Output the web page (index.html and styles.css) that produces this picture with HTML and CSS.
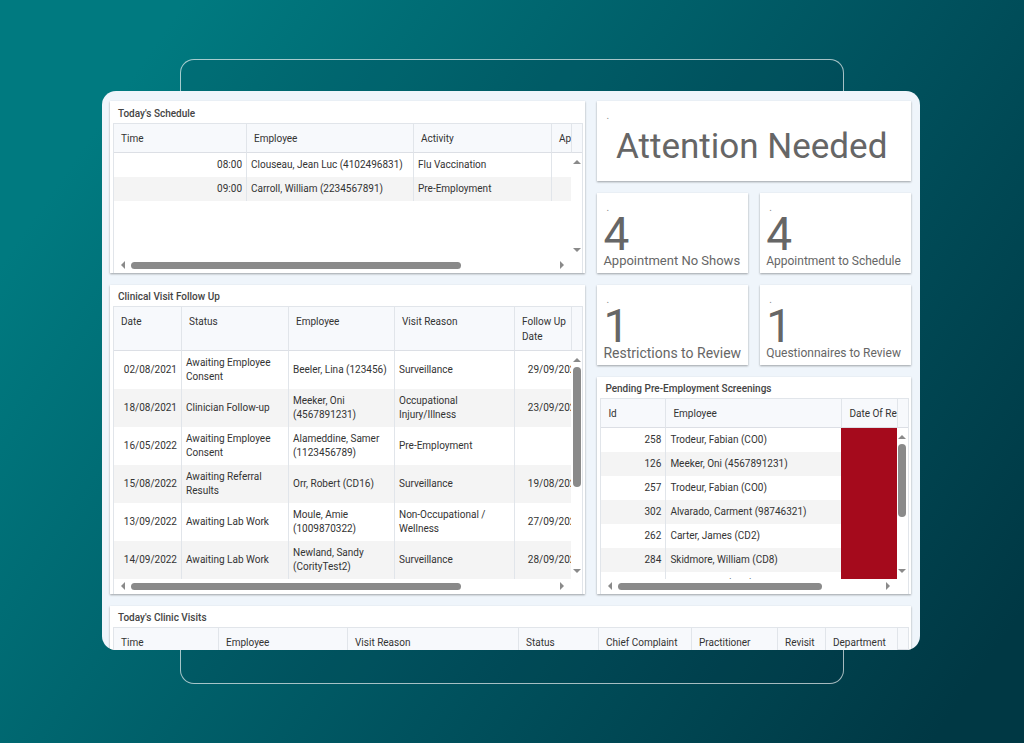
FILE: index.html
```html
<!DOCTYPE html>
<html lang="en">
<head>
    <meta charset="UTF-8">
    <meta name="viewport" content="width=device-width, initial-scale=1.0">
    <title>Clinic Dashboard</title>
    <link rel="stylesheet" href="styles.css">
</head>
<body>

<div class="stage">
    <div class="outline"></div>
    <main class="dashboard">

        <section class="panel schedule">
            <h2>Today's Schedule</h2>
            <div class="grid">
                <div class="view">
                    <table class="schedule-table">
                        <thead>
                            <tr><th class="w-time">Time</th><th class="w-employee">Employee</th><th class="w-activity">Activity</th><th>Appointment</th></tr>
                        </thead>
                        <tbody>
                            <tr><td class="num">08:00</td><td>Clouseau, Jean Luc (4102496831)</td><td>Flu Vaccination</td><td></td></tr>
                            <tr><td class="num">09:00</td><td>Carroll, William (2234567891)</td><td>Pre-Employment</td><td></td></tr>
                        </tbody>
                    </table>
                </div>
                <div class="side">
                    <div class="corner"></div>
                    <div class="vbar"><i class="up"></i><div class="track"></div><i class="down"></i></div>
                </div>
                <div class="hbar"><i class="left"></i><div class="track"><div class="thumb"></div></div><i class="right"></i></div>
            </div>
        </section>

        <section class="panel attention">
            <span class="dot">.</span>
            <h1>Attention Needed</h1>
        </section>

        <section class="panel card">
            <span class="dot">.</span>
            <strong>4</strong>
            <p class="medium">Appointment No Shows</p>
        </section>
        <section class="panel card">
            <span class="dot">.</span>
            <strong>4</strong>
            <p class="small">Appointment to Schedule</p>
        </section>

        <section class="panel followup">
            <h2>Clinical Visit Follow Up</h2>
            <div class="grid">
                <div class="view">
                    <table class="followup-table">
                        <thead>
                            <tr><th class="w-date">Date</th><th class="w-status">Status</th><th class="w-person">Employee</th><th class="w-reason">Visit Reason</th><th>Follow Up Date</th></tr>
                        </thead>
                        <tbody>
                            <tr><td class="num">02/08/2021</td><td>Awaiting Employee Consent</td><td>Beeler, Lina (123456)</td><td>Surveillance</td><td class="num">29/09/2021</td></tr>
                            <tr><td class="num">18/08/2021</td><td>Clinician Follow-up</td><td>Meeker, Oni (4567891231)</td><td>Occupational Injury/Illness</td><td class="num">23/09/2021</td></tr>
                            <tr><td class="num">16/05/2022</td><td>Awaiting Employee Consent</td><td>Alameddine, Samer (1123456789)</td><td>Pre-Employment</td><td></td></tr>
                            <tr><td class="num">15/08/2022</td><td>Awaiting Referral Results</td><td>Orr, Robert (CD16)</td><td>Surveillance</td><td class="num">19/08/2022</td></tr>
                            <tr><td class="num">13/09/2022</td><td>Awaiting Lab Work</td><td>Moule, Amie (1009870322)</td><td>Non-Occupational / Wellness</td><td class="num">27/09/2022</td></tr>
                            <tr><td class="num">14/09/2022</td><td>Awaiting Lab Work</td><td>Newland, Sandy (CorityTest2)</td><td>Surveillance</td><td class="num">28/09/2022</td></tr>
                        </tbody>
                    </table>
                </div>
                <div class="side">
                    <div class="corner tall"></div>
                    <div class="vbar"><i class="up"></i><div class="track"><div class="thumb"></div></div><i class="down"></i></div>
                </div>
                <div class="hbar"><i class="left"></i><div class="track"><div class="thumb"></div></div><i class="right"></i></div>
            </div>
        </section>

        <section class="panel card">
            <span class="dot">.</span>
            <strong>1</strong>
            <p>Restrictions to Review</p>
        </section>
        <section class="panel card">
            <span class="dot">.</span>
            <strong>1</strong>
            <p class="small">Questionnaires to Review</p>
        </section>

        <section class="panel pending">
            <h2>Pending Pre-Employment Screenings</h2>
            <div class="grid">
                <div class="view">
                    <table class="pending-table">
                        <thead>
                            <tr><th class="w-id">Id</th><th class="w-name">Employee</th><th>Date Of Results</th></tr>
                        </thead>
                        <tbody>
                            <tr><td class="num">258</td><td>Trodeur, Fabian (CO0)</td><td class="overdue"></td></tr>
                            <tr><td class="num">126</td><td>Meeker, Oni (4567891231)</td><td class="overdue"></td></tr>
                            <tr><td class="num">257</td><td>Trodeur, Fabian (CO0)</td><td class="overdue"></td></tr>
                            <tr><td class="num">302</td><td>Alvarado, Carment (98746321)</td><td class="overdue"></td></tr>
                            <tr><td class="num">262</td><td>Carter, James (CD2)</td><td class="overdue"></td></tr>
                            <tr><td class="num">284</td><td>Skidmore, William (CD8)</td><td class="overdue"></td></tr>
                            <tr><td class="num">261</td><td>Vau, Carlisle (CD4)</td><td class="overdue"></td></tr>
                        </tbody>
                    </table>
                </div>
                <div class="side">
                    <div class="corner"></div>
                    <div class="vbar"><i class="up"></i><div class="track"><div class="thumb"></div></div><i class="down"></i></div>
                </div>
                <div class="hbar"><i class="left"></i><div class="track"><div class="thumb"></div></div><i class="right"></i></div>
            </div>
        </section>

        <section class="panel visits">
            <h2>Today's Clinic Visits</h2>
            <div class="grid">
                <div class="view">
                    <table class="visits-table">
                        <thead>
                            <tr><th class="v-time">Time</th><th class="v-employee">Employee</th><th class="v-reason">Visit Reason</th><th class="v-status">Status</th><th class="v-complaint">Chief Complaint</th><th class="v-doctor">Practitioner</th><th class="v-revisit">Revisit</th><th>Department</th></tr>
                        </thead>
                    </table>
                </div>
                <div class="side">
                    <div class="corner"></div>
                </div>
            </div>
        </section>

    </main>
</div>

</body>
</html>
```

FILE: styles.css
```css
* {
    box-sizing: border-box;
}
body {
    margin: 0;
    font-family: Roboto, Arial, sans-serif;
    font-size: 10px;
    line-height: 14px;
    color: #333;
}
h1, h2, p {
    margin: 0;
}
.stage {
    display: grid;
    min-height: 100vh;
    padding: 59px 104px 59px 102px;
    background: linear-gradient(125deg, #007a80 12%, #00525e 60%, #003844 94%);
}
.outline {
    grid-area: 1 / 1;
    margin: 0 76px 0 78px;
    border: 1px solid rgba(255, 255, 255, 0.65);
    border-radius: 14px;
    background: rgba(0, 30, 45, 0.1);
}
.dashboard {
    grid-area: 1 / 1;
    align-self: start;
    display: grid;
    grid-template-columns: 476fr 151fr 151fr;
    grid-template-rows: 80px 80px 80px 217px 44px;
    gap: 12px;
    margin-top: 32px;
    padding: 10px 9px 0 8px;
    border-radius: 14px;
    background: #eff5fb;
    overflow: hidden;
}
.panel {
    display: flex;
    flex-direction: column;
    min-width: 0;
    min-height: 0;
    background: #fff;
    box-shadow: 0 1px 2px rgba(0, 0, 0, 0.35);
}
.schedule {
    grid-row: 1 / 3;
    grid-column: 1;
}
.attention {
    grid-column: 2 / 4;
}
.followup {
    grid-row: 3 / 5;
    grid-column: 1;
}
.pending {
    grid-column: 2 / 4;
}
.visits {
    grid-column: 1 / 4;
}
.panel h2 {
    padding: 4px 8px 2px;
    font-size: 10px;
    line-height: 15px;
    font-weight: 500;
    color: #444;
}
.schedule h2 {
    padding-top: 5px;
}

/* number cards */
.dot {
    padding: 10px 9px 0;
    line-height: 10px;
    color: #888;
}
.attention h1 {
    padding-right: 5px;
    font-size: 35px;
    line-height: 52px;
    font-weight: 400;
    text-align: center;
    color: #666;
}
.card strong {
    padding: 0 6px;
    font-size: 46px;
    line-height: 42px;
    font-weight: 400;
    color: #666;
}
.card p {
    padding: 0 6px;
    font-size: 14px;
    line-height: 12px;
    white-space: nowrap;
    color: #666;
}
.card .medium {
    font-size: 13px;
}
.card .small {
    font-size: 12px;
}

/* data grids */
.grid {
    flex: 1;
    display: grid;
    grid-template-columns: minmax(0, 1fr) 11px;
    grid-template-rows: minmax(0, 1fr) auto;
    min-height: 0;
    margin: 0 2px 0 3px;
    border: 1px solid #e1e5ea;
    border-bottom: none;
}
.view {
    overflow: hidden;
}
table {
    table-layout: fixed;
    border-collapse: separate;
    border-spacing: 0;
}
th {
    padding: 7px 7px 6px;
    font-weight: 400;
    line-height: 15px;
    text-align: left;
    vertical-align: top;
    white-space: nowrap;
    background: #f7f9fc;
    border-bottom: 1px solid #dcdfe5;
}
td {
    height: 24px;
    padding: 5px 4px;
}
th + th, td + td {
    border-left: 1px solid #e1e5ea;
}
tbody tr:nth-child(even) {
    background: #f4f4f4;
}
.num {
    text-align: right;
}
.overdue, td + .overdue {
    background: #a50a1c;
    border-left-color: #a50a1c;
}
.schedule-table {
    width: 560px;
}
.w-time {
    width: 132px;
}
.w-employee {
    width: 167px;
}
.w-activity {
    width: 138px;
}
.followup-table {
    width: 471px;
}
.followup-table th {
    white-space: normal;
}
.followup-table td {
    height: 38px;
}
.w-date {
    width: 67px;
}
.w-status {
    width: 107px;
}
.w-person {
    width: 106px;
}
.w-reason {
    width: 120px;
}
.pending-table {
    width: 370px;
}
.w-id {
    width: 64px;
}
.w-name {
    width: 176px;
}
.visits-table {
    width: 100%;
}
.v-time {
    width: 104px;
}
.v-employee {
    width: 129px;
}
.v-reason {
    width: 171px;
}
.v-status {
    width: 80px;
}
.v-complaint {
    width: 93px;
}
.v-doctor {
    width: 86px;
}
.v-revisit {
    width: 48px;
}

/* scrollbars */
.side {
    display: flex;
    flex-direction: column;
}
.corner {
    height: 29px;
    background: #f7f9fc;
    border-left: 1px solid #e1e5ea;
    border-bottom: 1px solid #dcdfe5;
}
.corner.tall {
    height: 44px;
}
.vbar {
    flex: 1;
    display: flex;
    flex-direction: column;
    align-items: center;
    gap: 5px;
    padding: 7px 1px 6px;
}
.hbar {
    grid-column: 1;
    display: flex;
    align-items: center;
    gap: 6px;
    height: 14px;
    margin-bottom: 1px;
    padding: 0 7px;
}
.track {
    flex: 1;
}
.thumb {
    border-radius: 4px;
    background: #8a8a8a;
}
.hbar .thumb {
    width: 78%;
    height: 7px;
}
.vbar .thumb {
    width: 8px;
    height: 61%;
}
i {
    border: 4px solid transparent;
}
i.up {
    border-top: none;
    border-bottom-color: #8a8a8a;
}
i.down {
    border-bottom: none;
    border-top-color: #8a8a8a;
}
i.left {
    border-left: none;
    border-right-color: #8a8a8a;
}
i.right {
    border-right: none;
    border-left-color: #8a8a8a;
}
```
